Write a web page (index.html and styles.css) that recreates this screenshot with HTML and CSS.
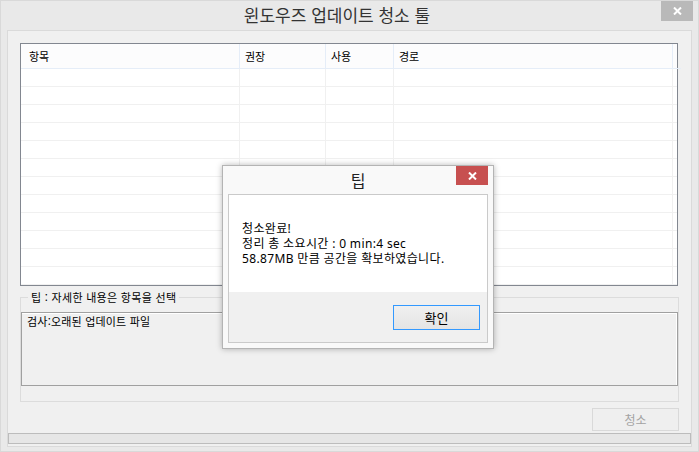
FILE: index.html
```html
<!DOCTYPE html>
<html lang="ko">
<head>
    <meta charset="UTF-8">
    <title>윈도우즈 업데이트 청소 툴</title>
    <link rel="stylesheet" href="styles.css">
</head>
<body>
    <div class="window">
        <div class="titlebar">
            <div class="title">윈도우즈 업데이트 청소 툴</div>
            <div class="close-btn">
                <svg width="9" height="8" viewBox="0 0 9 8"><path d="M1 0.5 L8 7.5 M8 0.5 L1 7.5" stroke="#fff" stroke-width="2"/></svg>
            </div>
        </div>

        <div class="client">
            <div class="content">
                <div class="listview">
                    <div class="lv-row lv-head"><span>항목</span><span>권장</span><span>사용</span><span>경로</span><span></span></div>
                    <div class="lv-row"><span></span><span></span><span></span><span></span><span></span></div>
                    <div class="lv-row"><span></span><span></span><span></span><span></span><span></span></div>
                    <div class="lv-row"><span></span><span></span><span></span><span></span><span></span></div>
                    <div class="lv-row"><span></span><span></span><span></span><span></span><span></span></div>
                    <div class="lv-row"><span></span><span></span><span></span><span></span><span></span></div>
                    <div class="lv-row"><span></span><span></span><span></span><span></span><span></span></div>
                    <div class="lv-row"><span></span><span></span><span></span><span></span><span></span></div>
                    <div class="lv-row"><span></span><span></span><span></span><span></span><span></span></div>
                    <div class="lv-row"><span></span><span></span><span></span><span></span><span></span></div>
                    <div class="lv-row"><span></span><span></span><span></span><span></span><span></span></div>
                    <div class="lv-row"><span></span><span></span><span></span><span></span><span></span></div>
                    <div class="lv-row"><span></span><span></span><span></span><span></span><span></span></div>
                </div>

                <fieldset class="groupbox">
                    <legend>팁 : 자세한 내용은 항목을 선택</legend>
                    <div class="textbox">검사:오래된 업데이트 파일</div>
                </fieldset>

                <div class="actions">
                    <button class="btn" disabled>청소</button>
                </div>
            </div>
            <div class="progress"></div>
        </div>

        <!-- message box -->
        <div class="dialog">
            <div class="dlg-title">팁</div>
            <div class="dlg-close">
                <svg width="9" height="8" viewBox="0 0 9 8"><path d="M1 0.5 L8 7.5 M8 0.5 L1 7.5" stroke="#fff" stroke-width="2"/></svg>
            </div>
            <div class="dlg-frame">
                <div class="dlg-body">
                    <div>청소완료!</div>
                    <div>정리 총 소요시간 : 0 min:4 sec</div>
                    <div>58.87MB 만큼 공간을 확보하였습니다.</div>
                </div>
                <div class="dlg-footer">
                    <button class="btn btn-ok">확인</button>
                </div>
            </div>
        </div>
    </div>
</body>
</html>
```

FILE: styles.css
```css
* {
    box-sizing: border-box;
}

body {
    margin: 0;
    font-family: "Noto Sans", "Noto Sans CJK KR", sans-serif;
    font-size: 12px;
    color: #000;
    background: #e9e9e9;
}

.window {
    position: relative;
    width: 699px;
    height: 452px;
    border: 1px solid #d9d9d9;
    background: #e9e9e9;
}

.titlebar {
    display: flex;
    height: 29px;
}

.title {
    flex: 1;
    padding-left: 12px;
    text-align: center;
    font-family: "Noto Sans CJK KR", sans-serif;
    font-size: 17px;
    line-height: 28px;
    color: #333;
}

.close-btn {
    width: 32px;
    height: 20px;
    margin-right: 5px;
    background: #b9b9b9;
    display: flex;
    align-items: center;
    justify-content: center;
}

.client {
    height: 417px;
    margin: 0 6px;
    border: 1px solid #dadada;
    background: #f0f0f0;
}

.content {
    padding: 12px 12px 0 12px;
}

/* list view */
.listview {
    width: 658px;
    height: 243px;
    border: 1px solid #828790;
    background: #fff;
}

.lv-row {
    display: grid;
    grid-template-columns: 219px 86px 68px 279px 1fr;
    height: 18px;
}

.lv-row span {
    border-right: 1px solid #f0f0f0;
    border-bottom: 1px solid #f0f0f0;
}

.lv-row span:last-child {
    border-right: none;
}

.lv-head {
    height: 25px;
    background: #fcfcfd;
}

.lv-head span {
    padding-left: 8px;
    line-height: 24px;
    font-size: 11px;
    border-right-color: #e5edf8;
    border-bottom-color: #e5edf8;
    font-family: "Noto Sans CJK KR", sans-serif;
}

.lv-head span:nth-child(2),
.lv-head span:nth-child(3),
.lv-head span:nth-child(4) {
    padding-left: 5px;
}

/* group box */
.groupbox {
    width: 659px;
    margin: 4px 0 0 0;
    padding: 0;
    border: 1px solid #dcdcdc;
}

.groupbox legend {
    margin-left: 7px;
    padding: 0 3px;
    font-size: 11px;
    line-height: 15px;
    letter-spacing: 0.3px;
    font-family: "Noto Sans CJK KR", sans-serif;
}

.textbox {
    height: 74px;
    margin: 7px 0 15px 0;
    padding: 1px 5px;
    font-size: 11px;
    line-height: 15px;
    letter-spacing: 0.2px;
    border: 1px solid #a0a0a0;
    box-shadow: inset -1px 1px 0 #fff;
    font-family: "Noto Sans CJK KR", sans-serif;
}

.actions {
    display: flex;
    justify-content: flex-end;
    width: 659px;
    margin-top: 6px;
}

.btn {
    width: 87px;
    height: 23px;
    padding: 0;
    font-family: "Noto Sans CJK KR", sans-serif;
    font-size: 12px;
    border: 1px solid #d9d9d9;
    background: #efefef;
    color: #a3a3a3;
}

.progress {
    height: 11px;
    margin-top: 2px;
    border: 1px solid #bcbcbc;
    background: #e6e6e6;
}

/* message box */
.dialog {
    position: absolute;
    left: 221px;
    top: 164px;
    width: 272px;
    height: 184px;
    padding: 0 5px 5px 5px;
    border: 1px solid #b4b4b4;
    background: #f9f9f9;
    box-shadow: 0 0 6px rgba(0, 0, 0, 0.28);
    display: flex;
    flex-direction: column;
}

.dlg-title {
    height: 28px;
    text-align: center;
    font-family: "Noto Sans CJK KR", sans-serif;
    font-size: 16px;
    line-height: 28px;
    color: #222;
}

.dlg-close {
    position: absolute;
    top: 0;
    right: 5px;
    width: 32px;
    height: 19px;
    background: #c75050;
    display: flex;
    align-items: center;
    justify-content: center;
}

.dlg-frame {
    flex: 1;
    border: 1px solid #cacaca;
    display: flex;
    flex-direction: column;
}

.dlg-body {
    height: 97px;
    padding: 26px 0 0 13px;
    line-height: 15px;
    letter-spacing: 0.35px;
    background: #fff;
}

.dlg-body div {
    height: 15px;
}

.dlg-footer {
    flex: 1;
    display: flex;
    justify-content: flex-end;
    align-items: flex-start;
    padding: 13px 7px 0 0;
    background: #f0f0f0;
}

.btn-ok {
    height: 25px;
    font-size: 13px;
    border: 1px solid #3399ff;
    background: linear-gradient(#f0f0f0, #e4e4e4);
    color: #000;
}
```
